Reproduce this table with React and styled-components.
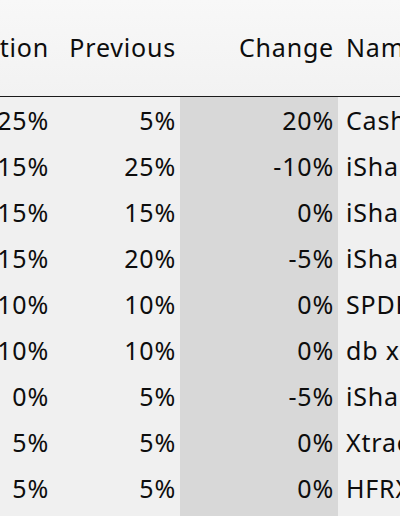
import React from "react"
import styled, { createGlobalStyle } from "styled-components"

const GlobalStyle = createGlobalStyle`
  html, body {
    margin: 0;
    padding: 0;
    background: #f0f0f0;
    overflow: hidden;
  }
`

const rows = [
  { allocation: "25%", previous: "5%", change: "20%", name: "Cash" },
  { allocation: "15%", previous: "25%", change: "-10%", name: "iShares Core MSCI World" },
  { allocation: "15%", previous: "15%", change: "0%", name: "iShares Core S&P 500" },
  { allocation: "15%", previous: "20%", change: "-5%", name: "iShares Euro Govt Bond" },
  { allocation: "10%", previous: "10%", change: "0%", name: "SPDR Gold Shares" },
  { allocation: "10%", previous: "10%", change: "0%", name: "db x-trackers II" },
  { allocation: "0%", previous: "5%", change: "-5%", name: "iShares MSCI EM" },
  { allocation: "5%", previous: "5%", change: "0%", name: "Xtrackers MSCI Japan" },
  { allocation: "5%", previous: "5%", change: "0%", name: "HFRX Global Hedge Fund" },
  { allocation: "0%", previous: "0%", change: "0%", name: "Vanguard FTSE All-World" },
]

const Viewport = styled.div`
  width: 400px;
  height: 516px;
  overflow: hidden;
  background: #f0f0f0;
  font-family: "Noto Sans", "Open Sans", sans-serif;
  font-size: 25px;
  letter-spacing: 0.8px;
  color: #0d0d0d;
`

/* table is scrolled sideways, so the first column starts off-screen */
const Table = styled.div`
  display: grid;
  grid-template-columns: 150px 127px 158px 260px;
  margin-left: -97px;
  width: max-content;
`

const HeaderCell = styled.div`
  height: 97px;
  display: flex;
  align-items: center;
  justify-content: ${p => (p.left ? "flex-start" : "flex-end")};
  padding: ${p => (p.left ? "0 0 3px 8px" : "0 4px 3px 0")};
  background: linear-gradient(#f8f8f8, #f2f2f2);
  border-bottom: 1px solid #1a1a1a;
  box-shadow: 0 1px 0 #b4b4b4;
  white-space: nowrap;
  box-sizing: border-box;
`

const Cell = styled.div`
  height: 46.1px;
  display: flex;
  align-items: center;
  justify-content: ${p => (p.left ? "flex-start" : "flex-end")};
  padding: ${p => (p.left ? "0 0 1px 8px" : "0 4px 1px 0")};
  background: ${p => (p.shaded ? "#d8d8d8" : "#f0f0f0")};
  white-space: nowrap;
  box-sizing: border-box;
`

const App = () => (
  <Viewport>
    <GlobalStyle />
    <Table>
      <HeaderCell>Allocation</HeaderCell>
      <HeaderCell>Previous</HeaderCell>
      <HeaderCell>Change</HeaderCell>
      <HeaderCell left>Name</HeaderCell>
      {rows.map(r => (
        <React.Fragment key={r.name}>
          <Cell>{r.allocation}</Cell>
          <Cell>{r.previous}</Cell>
          <Cell shaded>{r.change}</Cell>
          <Cell left>{r.name}</Cell>
        </React.Fragment>
      ))}
    </Table>
  </Viewport>
)

export default App
